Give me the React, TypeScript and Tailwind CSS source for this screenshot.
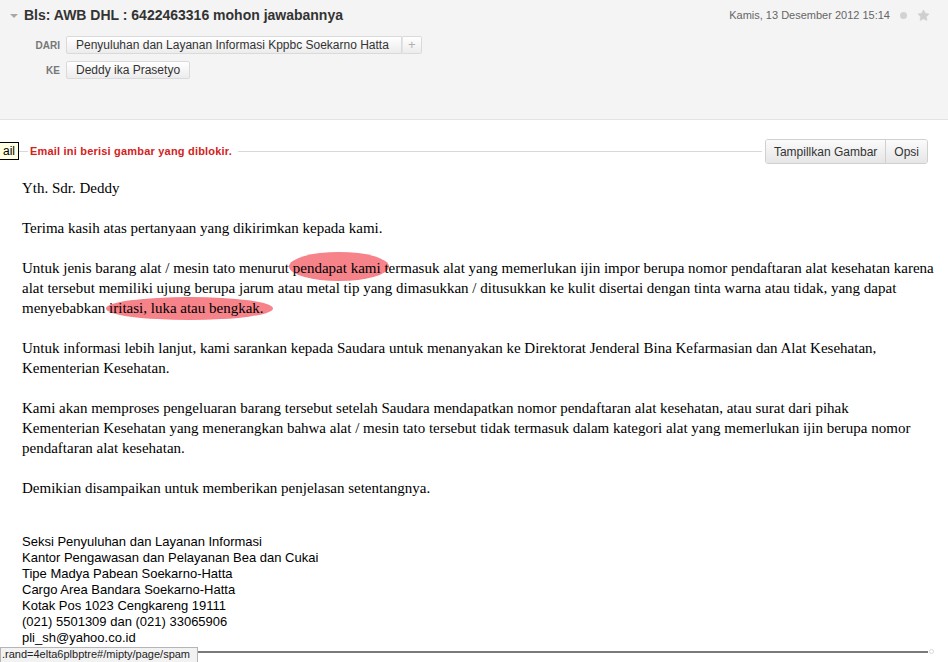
import { Star } from "lucide-react";

const sans = "font-['Liberation_Sans',Arial,sans-serif]";
const serif = "font-['Liberation_Serif','Times_New_Roman',serif]";

const chip =
   "h-[18px] flex items-center px-[9px] text-[12px] text-[#333] border border-[#dadada] rounded-[2px] bg-gradient-to-b from-white to-[#ececec]";

const btn =
   "h-[23px] flex items-center px-[8px] text-[12px] text-[#333] bg-gradient-to-b from-[#fbfbfb] to-[#e6e6e6]";

const Mark = ({ children, box }: { children: string; box: string }) => (
   <span className="relative">
      <span className={`absolute -z-10 rounded-[50%] bg-[#f6828a] blur-[0.6px] ${box}`} />
      {children}
   </span>
);

const signature = [
   "Seksi Penyuluhan dan Layanan Informasi",
   "Kantor Pengawasan dan Pelayanan Bea dan Cukai",
   "Tipe Madya Pabean Soekarno-Hatta",
   "Cargo Area Bandara Soekarno-Hatta",
   "Kotak Pos 1023 Cengkareng 19111",
   "(021) 5501309 dan (021) 33065906",
   "pli_sh@yahoo.co.id",
];

const App = () => (
   <div className={`${sans} relative w-full h-[662px] overflow-hidden bg-white`}>
      {/* header */}
      <div className="h-[120px] bg-[#f4f4f4] border-b border-[#e3e3e3]">
         <div className="flex items-center h-[31px] pl-[10px] pr-[18px]">
            <svg width="8" height="6" viewBox="0 0 8 6" className="mt-[1px]">
               <path d="M0 1h8L4 5z" fill="#a8a8a8" />
            </svg>
            <h1 className="ml-[6px] text-[14px] font-bold text-[#333]">
               Bls: AWB DHL : 6422463316 mohon jawabannya
            </h1>
            <div className="flex-1" />
            <span className="text-[11px] text-[#666]">Kamis, 13 Desember 2012 15:14</span>
            <span className="ml-[10px] w-[7px] h-[7px] rounded-full bg-[#d2d2d2]" />
            <Star size={13} className="ml-[10px] text-[#cfcfcf]" fill="#cfcfcf" strokeWidth={1} />
         </div>
         <div className="mt-[5px] flex flex-col gap-[7px]">
            <div className="flex items-center gap-[6px]">
               <span className="w-[60px] text-right text-[10px] font-bold text-[#777]">DARI</span>
               <div className="flex">
                  <span className={`${chip} rounded-r-none pr-[12px]`}>
                     Penyuluhan dan Layanan Informasi Kppbc Soekarno Hatta
                  </span>
                  <span className={`${chip} w-[18px] justify-center border-l-[#e4e4e4] rounded-l-none px-0 text-[13px] text-[#b0b0b0]`}>
                     +
                  </span>
               </div>
            </div>
            <div className="flex items-center gap-[6px]">
               <span className="w-[60px] text-right text-[10px] font-bold text-[#777]">KE</span>
               <span className={chip}>Deddy ika Prasetyo</span>
            </div>
         </div>
      </div>

      {/* blocked images bar */}
      <div className="relative mt-[19px] flex items-center pl-[18px] pr-[20px]">
         <span className="absolute -left-[1px] top-[3px] h-[18px] px-[3px] flex items-center bg-[#ffffe1] border border-black text-[12px] text-black">
            ail
         </span>
         <span className="w-[10px] h-px bg-[#d8d8d8]" />
         <span className="ml-[2px] text-[11px] font-bold tracking-[0.2px] text-[#d3221c]">
            Email ini berisi gambar yang diblokir.
         </span>
         <span className="flex-1 h-px bg-[#d8d8d8] ml-[6px] mr-[3px]" />
         <div className="flex border border-[#d0d0d0] rounded-[3px] overflow-hidden">
            <span className={`${btn} border-r border-[#d0d0d0]`}>Tampillkan Gambar</span>
            <span className={btn}>Opsi</span>
         </div>
      </div>

      {/* message */}
      <div className={`${serif} isolate mt-[14px] pl-[22px] text-[15px] leading-[20px] text-black whitespace-nowrap`}>
         <p className="mb-5">Yth. Sdr. Deddy</p>
         <p className="mb-5">Terima kasih atas pertanyaan yang dikirimkan kepada kami.</p>
         <p className="mb-5">
            Untuk jenis barang alat / mesin tato menurut{" "}
            <Mark box="-left-[4px] -right-[8px] -top-[8px] -bottom-[5px]">pendapat kami</Mark> termasuk alat yang
            memerlukan ijin impor berupa nomor pendaftaran alat kesehatan karena
            <br />
            alat tersebut memiliki ujung berupa jarum atau metal tip yang dimasukkan / ditusukkan ke kulit disertai
            dengan tinta warna atau tidak, yang dapat
            <br />
            menyebabkan{" "}
            <Mark box="-left-[3px] -right-[9px] -top-[3px] -bottom-[4px]">iritasi, luka atau bengkak.</Mark>
         </p>
         <p className="mb-5">
            Untuk informasi lebih lanjut, kami sarankan kepada Saudara untuk menanyakan ke Direktorat Jenderal Bina
            Kefarmasian dan Alat Kesehatan,
            <br />
            Kementerian Kesehatan.
         </p>
         <p className="mb-5">
            Kami akan memproses pengeluaran barang tersebut setelah Saudara mendapatkan nomor pendaftaran alat
            kesehatan, atau surat dari pihak
            <br />
            Kementerian Kesehatan yang menerangkan bahwa alat / mesin tato tersebut tidak termasuk dalam kategori alat
            yang memerlukan ijin berupa nomor
            <br />
            pendaftaran alat kesehatan.
         </p>
         <p>Demikian disampaikan untuk memberikan penjelasan setentangnya.</p>
      </div>

      <div className={`${sans} mt-[36px] pl-[22px] text-[13px] leading-[16px] text-black`}>
         {signature.map(line => (
            <p key={line}>{line}</p>
         ))}
      </div>

      {/* bottom separator */}
      <div className="mt-[3px] mr-[14px] flex items-center">
         <span className="flex-1 h-[2px] bg-[#7a7a7a]" />
         <span className="ml-[1px] w-[5px] h-[5px] border border-[#d8d8d8] rounded-full" />
      </div>

      {/* browser status overlay */}
      <div className="absolute left-0 top-[647px] w-[198px] h-[15px] bg-[#f2f2f2] border border-b-0 border-[#b5b5b5] pl-[1px] text-[11px] leading-[13px] text-[#222] overflow-hidden whitespace-nowrap">
         .rand=4elta6plbptre#/mipty/page/spam
      </div>
   </div>
);

export default App;
